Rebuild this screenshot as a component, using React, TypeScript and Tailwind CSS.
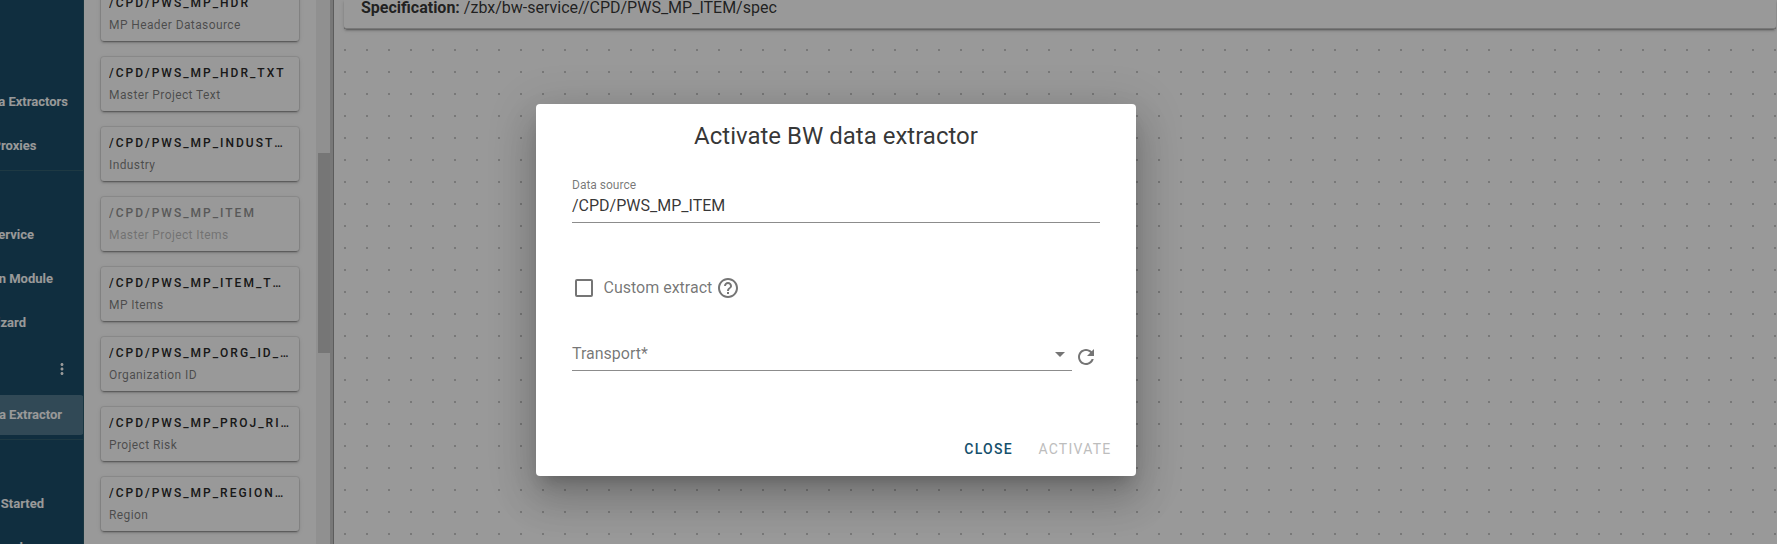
import React from "react";

type Source = { name: string; text: string; disabled?: boolean };

const sources: Source[] = [
  { name: "/CPD/PWS_MP_HDR", text: "MP Header Datasource" },
  { name: "/CPD/PWS_MP_HDR_TXT", text: "Master Project Text" },
  { name: "/CPD/PWS_MP_INDUSTRY", text: "Industry" },
  { name: "/CPD/PWS_MP_ITEM", text: "Master Project Items", disabled: true },
  { name: "/CPD/PWS_MP_ITEM_TXT", text: "MP Items" },
  { name: "/CPD/PWS_MP_ORG_ID_TXT", text: "Organization ID" },
  { name: "/CPD/PWS_MP_PROJ_RISK", text: "Project Risk" },
  { name: "/CPD/PWS_MP_REGION_TXT", text: "Region" },
];

function NavItem({ label, className }: { label: string; className: string }) {
  return (
    <div className={"flex h-11 shrink-0 items-center justify-end whitespace-nowrap text-[13px] font-bold text-white " + className}>
      {label}
    </div>
  );
}

function Sidebar() {
  return (
    <nav className="flex w-[84px] shrink-0 flex-col overflow-hidden border-r border-[#2a5a6c] bg-[#1c4e6a] pt-20">
      <NavItem label="a Extractors" className="pr-[15px]" />
      <NavItem label="Proxies" className="pr-[46.5px]" />
      <div className="mt-[2px] h-px shrink-0 bg-[#335f70]" />
      <div className="h-[42px] shrink-0" />
      <NavItem label="ervice" className="pr-[49px]" />
      <NavItem label="n Module" className="pr-[30px]" />
      <NavItem label="izard" className="pr-[57px]" />
      <div className="flex h-[50px] shrink-0 items-center justify-end pr-[12px] pb-[2px]">
        <svg className="size-[18px]" viewBox="0 0 24 24" fill="#fff">
          <path d="M12 8c1.1 0 2-.9 2-2s-.9-2-2-2-2 .9-2 2 .9 2 2 2zm0 2c-1.1 0-2 .9-2 2s.9 2 2 2 2-.9 2-2-.9-2-2-2zm0 6c-1.1 0-2 .9-2 2s.9 2 2 2 2-.9 2-2-.9-2-2-2z" />
        </svg>
      </div>
      <div className="-mr-px flex h-10 shrink-0 items-center justify-end whitespace-nowrap rounded-r bg-[#537b8f] pr-[22px] text-[13px] font-bold text-white">
        a Extractor
      </div>
      <div className="mt-1 h-px shrink-0 bg-[#335f70]" />
      <div className="h-[42px] shrink-0" />
      <NavItem label="Started" className="pr-[39px]" />
      <NavItem label="l" className="pr-[60px]" />
    </nav>
  );
}

function SourceCard({ source }: { source: Source }) {
  return (
    <div className="h-[54px] w-[198px] shrink-0 rounded-[3px] bg-white pr-[9px] pl-2 pt-[7px] shadow-[0_3px_1px_-2px_rgba(0,0,0,0.2),0_2px_2px_0_rgba(0,0,0,0.14),0_1px_5px_0_rgba(0,0,0,0.12),0_0_0_1px_rgba(0,0,0,0.08)]">
      <div className={source.disabled ? "opacity-50" : ""}>
        <div className="truncate text-[12px] leading-[18px] font-medium tracking-[2px] text-[#2a2a2a]">{source.name}</div>
        <div className="mt-1 text-[12px] leading-[18px] tracking-[0.4px] text-black/52">{source.text}</div>
      </div>
    </div>
  );
}

function SourceList() {
  return (
    <div className="flex w-[250px] shrink-0 overflow-hidden">
      <div className="flex w-[232px] shrink-0 flex-col gap-4 pl-[17px]">
        <div className="-mt-[13px] flex flex-col gap-4">
          {sources.map((s) => (
            <SourceCard key={s.name} source={s} />
          ))}
        </div>
      </div>
      <div className="flex w-[14px] shrink-0 flex-col bg-[#f0f0f0] pt-[153px] pl-[2px]">
        <div className="h-[200px] bg-[#c5c5c5]" />
      </div>
      <div className="w-1 border-r border-[#9a9a9a] bg-[#c9c9c9]" />
    </div>
  );
}

function Canvas() {
  return (
    <main className="min-w-0 flex-1 pl-[10px] [background:conic-gradient(from_270deg_at_2px_2px,#c8c8c8_90deg,#fff_0)_10px_5px/22px_22px]">
      <div className="mr-px flex h-[29px] items-start rounded-b-[3px] border-b border-[#c8c8c8] bg-white pl-[17px] text-[16px] leading-6 text-black/80 shadow-[0_3px_1px_-2px_rgba(0,0,0,0.2),0_2px_2px_0_rgba(0,0,0,0.14),0_1px_5px_0_rgba(0,0,0,0.12)]">
        <p className="-mt-1">
          <b className="font-bold">Specification:</b> /zbx/bw-service//CPD/PWS_MP_ITEM/spec
        </p>
      </div>
    </main>
  );
}

function Dialog() {
  return (
    <section className="flex h-[372px] w-[600px] flex-col rounded bg-white px-9 text-black/80 shadow-[0_11px_15px_-7px_rgba(0,0,0,0.2),0_24px_38px_3px_rgba(0,0,0,0.14),0_9px_46px_8px_rgba(0,0,0,0.12)]">
      <h2 className="mt-4 text-center text-[24px] leading-8">Activate BW data extractor</h2>
      <div className="mt-[25px] flex h-[46px] flex-col border-b border-[#8c8c8c]">
        <label className="text-[12px] leading-4 text-black/55">Data source</label>
        <span className="mt-[3px] text-[16px] leading-5">/CPD/PWS_MP_ITEM</span>
      </div>
      <div className="mt-[53px] flex h-6 items-center pl-[3px] text-[16px] text-black/55">
        <span className="size-[18px] rounded-[2px] border-2 border-[#757575]" />
        <span className="ml-[10.5px]">Custom extract</span>
        <svg className="ml-[3.5px] size-6" viewBox="0 0 24 24" fill="#757575">
          <path d="M11 18h2v-2h-2v2zm1-16C6.480 2 2 6.480 2 12s4.480 10 10 10 10-4.480 10-10S17.520 2 12 2zm0 18c-4.410 0-8-3.590-8-8s3.590-8 8-8 8 3.590 8 8-3.590 8-8 8zm0-14c-2.210 0-4 1.790-4 4h2c0-1.100.9-2 2-2s2 .9 2 2c0 2-3 1.750-3 5h2c0-2.250 3-2.500 3-5 0-2.210-1.790-4-4-4z" />
        </svg>
      </div>
      <div className="mt-[41px] flex h-[30px]">
        <div className="flex w-[500px] items-start justify-between border-b border-[#8c8c8c] pr-[7px] text-black/55">
          <span className="mt-[3px] text-[16px] leading-5">Transport*</span>
          <svg className="mt-[11px] h-[5px] w-[10px]" viewBox="0 0 10 5" fill="#757575">
            <path d="M0 0h10L5 5z" />
          </svg>
        </div>
        <svg className="mt-1 ml-[2px] size-6" viewBox="0 0 24 24" fill="#757575">
          <path d="M17.650 6.350C16.200 4.900 14.210 4 12 4c-4.420 0-7.990 3.580-7.990 8s3.570 8 7.990 8c3.730 0 6.840-2.550 7.730-6h-2.080c-.82 2.330-3.040 4-5.650 4-3.310 0-6-2.690-6-6s2.690-6 6-6c1.660 0 3.140.69 4.220 1.780L13 11h7V4l-2.350 2.350z" />
        </svg>
      </div>
      <div className="-mr-[11.5px] mt-[60px] flex h-9 items-center justify-end gap-[25.5px] text-[14px] font-medium tracking-[1.25px]">
        <button className="text-[#15506c]">CLOSE</button>
        <button className="font-normal text-[#bdbdbd]">ACTIVATE</button>
      </div>
    </section>
  );
}

export default function App() {
  return (
    <div className="relative flex h-[544px] w-full overflow-hidden bg-white font-[Roboto,sans-serif]">
      <Sidebar />
      <SourceList />
      <Canvas />
      <div className="absolute inset-0 flex items-start bg-black/40 pt-[104px] pl-[536px]">
        <Dialog />
      </div>
    </div>
  );
}
